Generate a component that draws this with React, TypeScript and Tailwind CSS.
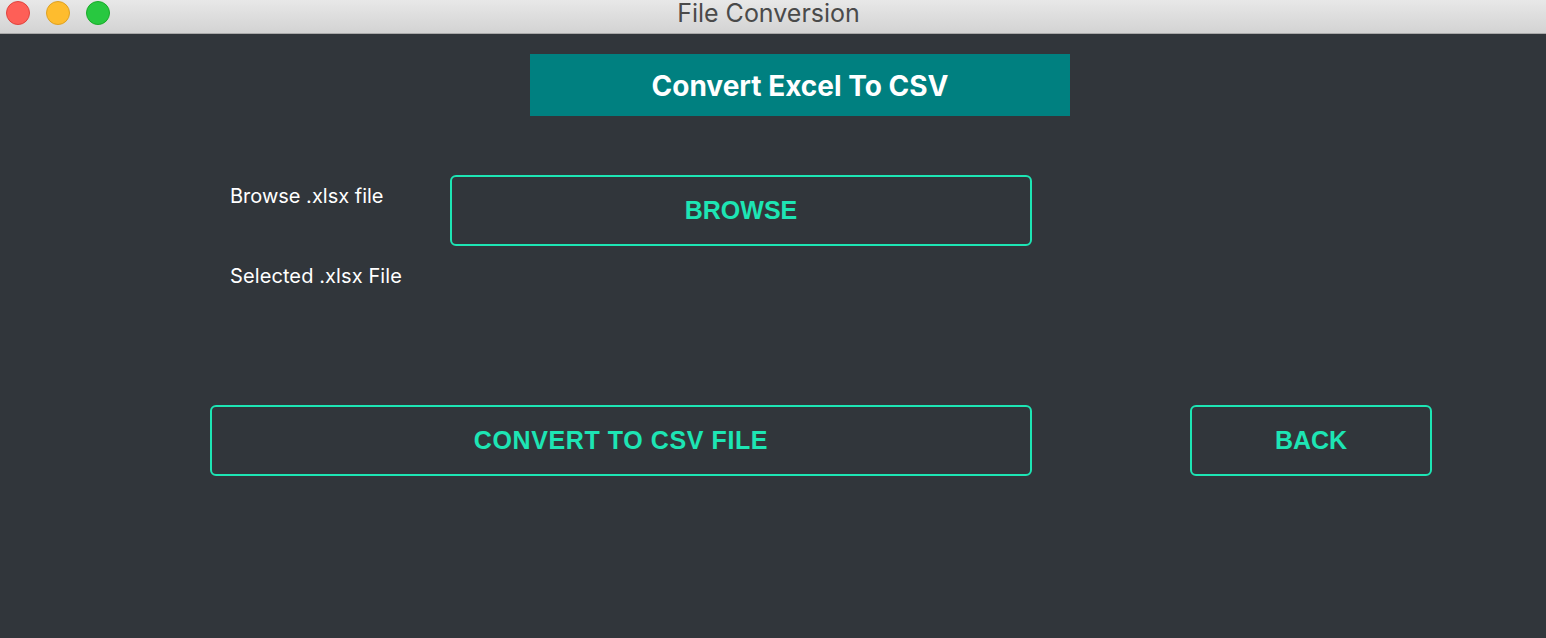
export default function App() {
  return (
    <div className="flex h-[638px] w-[1546px] flex-col overflow-hidden bg-[#31363b]">
      {/* title bar */}
      <div className="relative flex h-[34px] shrink-0 items-start justify-center border-b border-[#a9a9a9] bg-gradient-to-b from-[#e8e8e8] to-[#d3d3d3]">
        <div className="absolute left-[6px] top-0 flex h-[25px] items-center gap-[16px]">
          <span className="h-[24px] w-[24px] rounded-full border border-[#e0443e] bg-[#fe5f57]" />
          <span className="h-[24px] w-[24px] rounded-full border border-[#dea123] bg-[#febc2e]" />
          <span className="h-[24px] w-[24px] rounded-full border border-[#1aab29] bg-[#28c840]" />
        </div>
        <span className="mr-[9px] font-['Inter',sans-serif] text-[25px] leading-[27px] text-[#4a4a4a]">File Conversion</span>
      </div>

      <div className="flex flex-col">
        <div className="ml-[530px] mt-[20px] flex h-[62px] w-[540px] items-center justify-center bg-[#008080]">
          <span className="mt-[2px] font-['Inter',sans-serif] text-[28px] font-bold text-white">Convert Excel To CSV</span>
        </div>

        <div className="mt-[59px] flex">
          <div className="ml-[230px] flex w-[220px] flex-col gap-[52px] pt-[7px] font-['Inter',sans-serif] text-[20px] leading-[28px] text-white">
            <span>Browse .xlsx file</span>
            <span className="tracking-[0.1px]">Selected .xlsx File</span>
          </div>
          <button className="flex h-[71px] w-[582px] items-center justify-center rounded-[6px] border-2 border-[#1de5b4] font-['Liberation_Sans',sans-serif] text-[25px] font-bold text-[#1de5b4]">
            BROWSE
          </button>
        </div>

        <div className="mt-[115px] flex">
          <button className="ml-[210px] flex h-[71px] w-[822px] items-center justify-center rounded-[6px] border-2 border-[#1de5b4] font-['Liberation_Sans',sans-serif] text-[25px] font-bold tracking-[0.6px] text-[#1de5b4]">
            CONVERT TO CSV FILE
          </button>
          <button className="ml-[158px] flex h-[71px] w-[242px] items-center justify-center rounded-[6px] border-2 border-[#1de5b4] font-['Liberation_Sans',sans-serif] text-[25px] font-bold text-[#1de5b4]">
            BACK
          </button>
        </div>
      </div>
    </div>
  )
}
